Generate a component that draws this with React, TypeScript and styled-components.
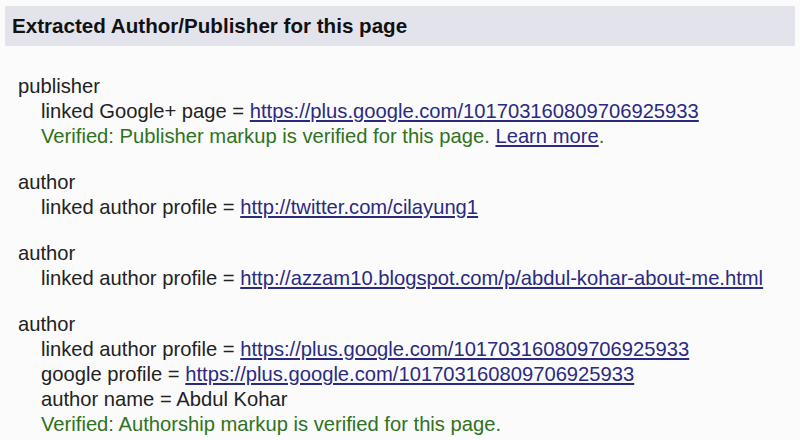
import React from "react";
import { createGlobalStyle, styled } from "styled-components";

const GlobalStyle = createGlobalStyle`
  html, body {
    margin: 0;
    padding: 0;
    background: #fbfbfc;
  }
  body {
    font-family: "Liberation Sans", Arial, sans-serif;
    color: #222222;
  }
`;

type Field = { label: string; value: string; href?: boolean };

interface Entity {
  kind: string;
  fields: Field[];
  verified?: string;
  learnMore?: boolean;
}

const plusUrl = "https://plus.google.com/101703160809706925933";

const entities: Entity[] = [
  {
    kind: "publisher",
    fields: [{ label: "linked Google+ page", value: plusUrl, href: true }],
    verified: "Verified: Publisher markup is verified for this page.",
    learnMore: true,
  },
  {
    kind: "author",
    fields: [
      {
        label: "linked author profile",
        value: "http://twitter.com/cilayung1",
        href: true,
      },
    ],
  },
  {
    kind: "author",
    fields: [
      {
        label: "linked author profile",
        value: "http://azzam10.blogspot.com/p/abdul-kohar-about-me.html",
        href: true,
      },
    ],
  },
  {
    kind: "author",
    fields: [
      { label: "linked author profile", value: plusUrl, href: true },
      { label: "google profile", value: plusUrl, href: true },
      { label: "author name", value: "Abdul Kohar" },
    ],
    verified: "Verified: Authorship markup is verified for this page.",
  },
];

export default function App() {
  return (
    <>
      <GlobalStyle />
      <Panel>
        <Header>Extracted Author/Publisher for this page</Header>
        <Body>
          {entities.map((e, i) => (
            <Section key={i}>
              <Kind>{e.kind}</Kind>
              {e.fields.map((f, j) => (
                <Line key={j}>
                  {f.label} ={" "}
                  {f.href ? <Link href="#">{f.value}</Link> : f.value}
                </Line>
              ))}
              {e.verified && (
                <Verified>
                  {e.learnMore ? (
                    <>
                      {e.verified.replace(/\.$/, ". ")}
                      <Link href="#">Learn more</Link>.
                    </>
                  ) : (
                    e.verified
                  )}
                </Verified>
              )}
            </Section>
          ))}
        </Body>
      </Panel>
    </>
  );
}

const Panel = styled.div`
  width: 790px;
  margin: 6px 0 0 5px;
`;

const Header = styled.div`
  height: 40px;
  display: flex;
  align-items: center;
  padding-left: 7px;
  background: #e3e3eb;
  font-size: 20.6px;
  font-weight: bold;
  color: #111111;
`;

const Body = styled.div`
  padding: 28px 0 0 13px;
  font-size: 20.2px;
  line-height: 25px;
`;

const Section = styled.div`
  margin-bottom: 21px;
`;

const Kind = styled.div``;

const Line = styled.div`
  padding-left: 23px;
  white-space: nowrap;
`;

const Verified = styled(Line)`
  color: #2e7220;
`;

const Link = styled.a`
  color: #2a2a80;
  text-decoration: underline;
`;
